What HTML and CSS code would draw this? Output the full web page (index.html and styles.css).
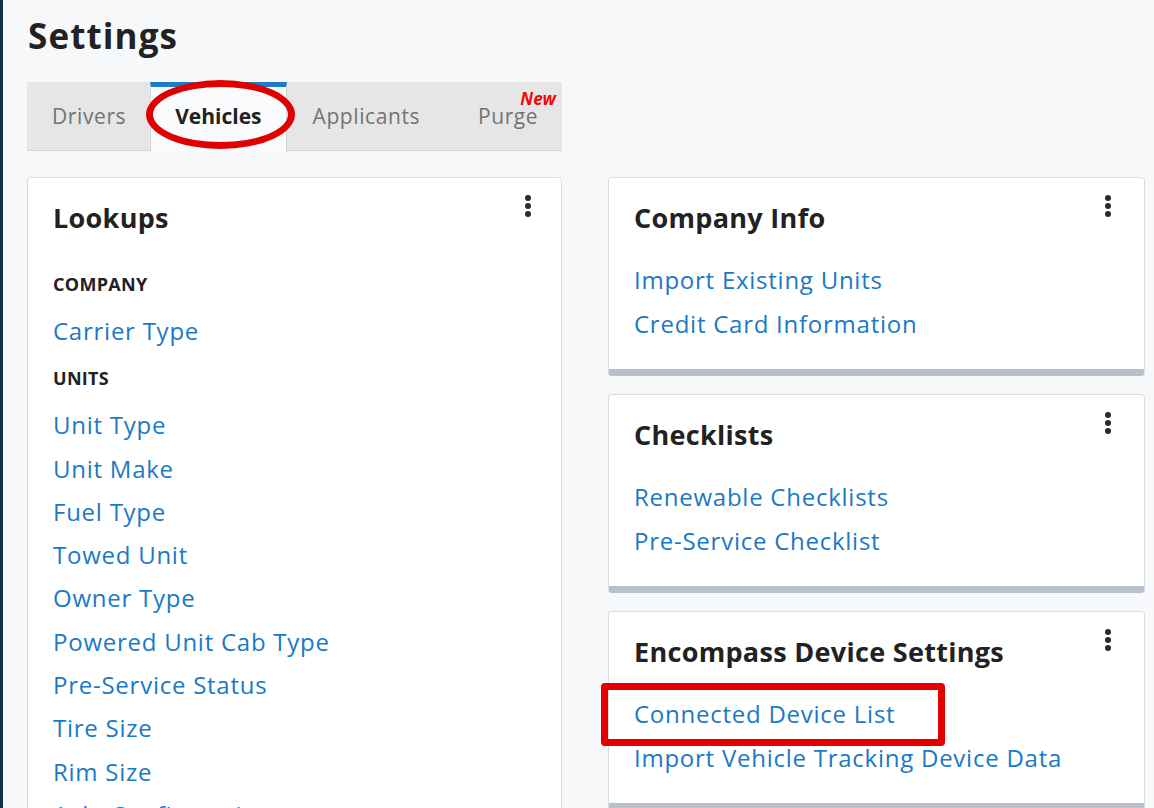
FILE: index.html
```html
<!DOCTYPE html>
<html lang="en">
<head>
<meta charset="utf-8">
<title>Settings</title>
<link rel="stylesheet" href="styles.css">
</head>
<body>
<div class="page">
  <h1 class="page-title">Settings</h1>

  <nav class="tabs">
    <a class="tab">Drivers</a>
    <a class="tab tab-active">Vehicles<span class="annot-ellipse"></span></a>
    <a class="tab">Applicants</a>
    <a class="tab">Purge<span class="badge-new">New</span></a>
  </nav>

  <div class="columns">
    <section class="card card-lookups">
      <header class="card-head">
        <h2 class="card-title">Lookups</h2>
        <span class="kebab"><i></i><i></i><i></i></span>
      </header>
      <h3 class="group-label">COMPANY</h3>
      <ul class="link-list link-list-dense">
        <li><a>Carrier Type</a></li>
      </ul>
      <h3 class="group-label">UNITS</h3>
      <ul class="link-list link-list-dense">
        <li><a>Unit Type</a></li>
        <li><a>Unit Make</a></li>
        <li><a>Fuel Type</a></li>
        <li><a>Towed Unit</a></li>
        <li><a>Owner Type</a></li>
        <li><a>Powered Unit Cab Type</a></li>
        <li><a>Pre-Service Status</a></li>
        <li><a>Tire Size</a></li>
        <li><a>Rim Size</a></li>
        <li><a>Axle Configuration</a></li>
      </ul>
    </section>

    <div class="stack">
      <section class="card card-raised">
        <header class="card-head">
          <h2 class="card-title">Company Info</h2>
          <span class="kebab"><i></i><i></i><i></i></span>
        </header>
        <ul class="link-list">
          <li><a>Import Existing Units</a></li>
          <li><a>Credit Card Information</a></li>
        </ul>
      </section>

      <section class="card card-raised">
        <header class="card-head">
          <h2 class="card-title">Checklists</h2>
          <span class="kebab"><i></i><i></i><i></i></span>
        </header>
        <ul class="link-list">
          <li><a>Renewable Checklists</a></li>
          <li><a>Pre-Service Checklist</a></li>
        </ul>
      </section>

      <section class="card card-raised">
        <header class="card-head">
          <h2 class="card-title">Encompass Device Settings</h2>
          <span class="kebab"><i></i><i></i><i></i></span>
        </header>
        <ul class="link-list">
          <li class="annotated"><a>Connected Device List</a><span class="annot-rect"></span></li>
          <li><a>Import Vehicle Tracking Device Data</a></li>
        </ul>
      </section>
    </div>
  </div>
</div>
</body>
</html>
```

FILE: styles.css
```css
* { box-sizing: border-box; }

html, body {
  margin: 0;
  padding: 0;
}

body {
  background: #f7f8fa;
  font-family: "Open Sans", "Liberation Sans", sans-serif;
  color: #222;
  border-left: 3px solid #0d3552;
  min-height: 808px;
}

.page {
  padding: 13px 9px 0 24px;
}

.page-title {
  margin: 0 0 23px 1px;
  font-size: 35px;
  line-height: 46px;
  font-weight: 700;
  letter-spacing: 1.1px;
  color: #222;
}

/* Tabs */
.tabs {
  display: flex;
  width: 535px;
  height: 69px;
  background: #e6e6e6;
  border-bottom: 1px solid #d6d6d6;
}

.tab {
  position: relative;
  display: block;
  height: 69px;
  padding: 20px 26px 0;
  font-size: 21px;
  line-height: 28px;
  letter-spacing: 0.6px;
  color: #737373;
  white-space: nowrap;
}

.tab:first-child {
  padding: 20px 24px 0 25px;
}

.tab:last-child {
  flex: 1;
  text-align: center;
  padding-left: 28px;
  padding-right: 20px;
}

.tab-active {
  background: #fafbfc;
  border-top: 5px solid #1a7cca;
  border-left: 1px solid #d6d6d6;
  border-right: 1px solid #d6d6d6;
  padding: 15px 24px 0;
  height: 70px;
  margin-bottom: -1px;
  font-weight: 700;
  letter-spacing: 0;
  color: #222;
}

.badge-new {
  position: absolute;
  top: 8px;
  right: 6px;
  font-size: 17px;
  line-height: 18px;
  font-weight: 700;
  font-style: italic;
  color: #ee0a0a;
  letter-spacing: 0;
}

.annot-ellipse {
  position: absolute;
  left: calc(50% - 72px);
  top: -7px;
  width: 149px;
  height: 69px;
  border: 7px solid #e10000;
  border-radius: 50%;
}

/* Columns */
.columns {
  display: grid;
  grid-template-columns: 535px 537px;
  column-gap: 46px;
  align-items: start;
  margin-top: 26px;
}

.stack {
  display: flex;
  flex-direction: column;
  gap: 18px;
}

.card {
  background: #fff;
  border: 1px solid #d9dde2;
  border-radius: 4px;
  padding: 23px 33px 23px 25px;
}

.card-lookups {
  padding-right: 30px;
}

.card-raised {
  border-bottom: 7px solid #b7c0cb;
}

.card-head {
  display: flex;
  justify-content: space-between;
  align-items: flex-start;
  margin-bottom: 23px;
}

.card-title {
  margin: 0;
  font-size: 27px;
  line-height: 34px;
  font-weight: 700;
  letter-spacing: 0.3px;
  color: #222;
}

.kebab {
  display: flex;
  flex-direction: column;
  gap: 2px;
  margin-top: -6px;
}

.kebab i {
  display: block;
  width: 6px;
  height: 6px;
  border-radius: 50%;
  background: #2a2a2a;
}

.group-label {
  margin: 14px 0 13px;
  font-size: 18px;
  line-height: 24px;
  font-weight: 700;
  letter-spacing: 0.3px;
  color: #222;
}

.card-head + .group-label {
  margin-top: 37px;
}

.link-list {
  list-style: none;
  margin: 0;
  padding: 0;
}

.link-list li {
  position: relative;
  font-size: 24px;
  line-height: 44px;
  letter-spacing: 0.75px;
  white-space: nowrap;
}

.link-list-dense li {
  line-height: 43.3px;
}

.link-list a {
  color: #1b79c5;
  cursor: pointer;
}

.annot-rect {
  position: absolute;
  left: -33px;
  top: -9px;
  width: 344px;
  height: 63px;
  border: 7px solid #e30000;
  border-radius: 4px;
}
```
